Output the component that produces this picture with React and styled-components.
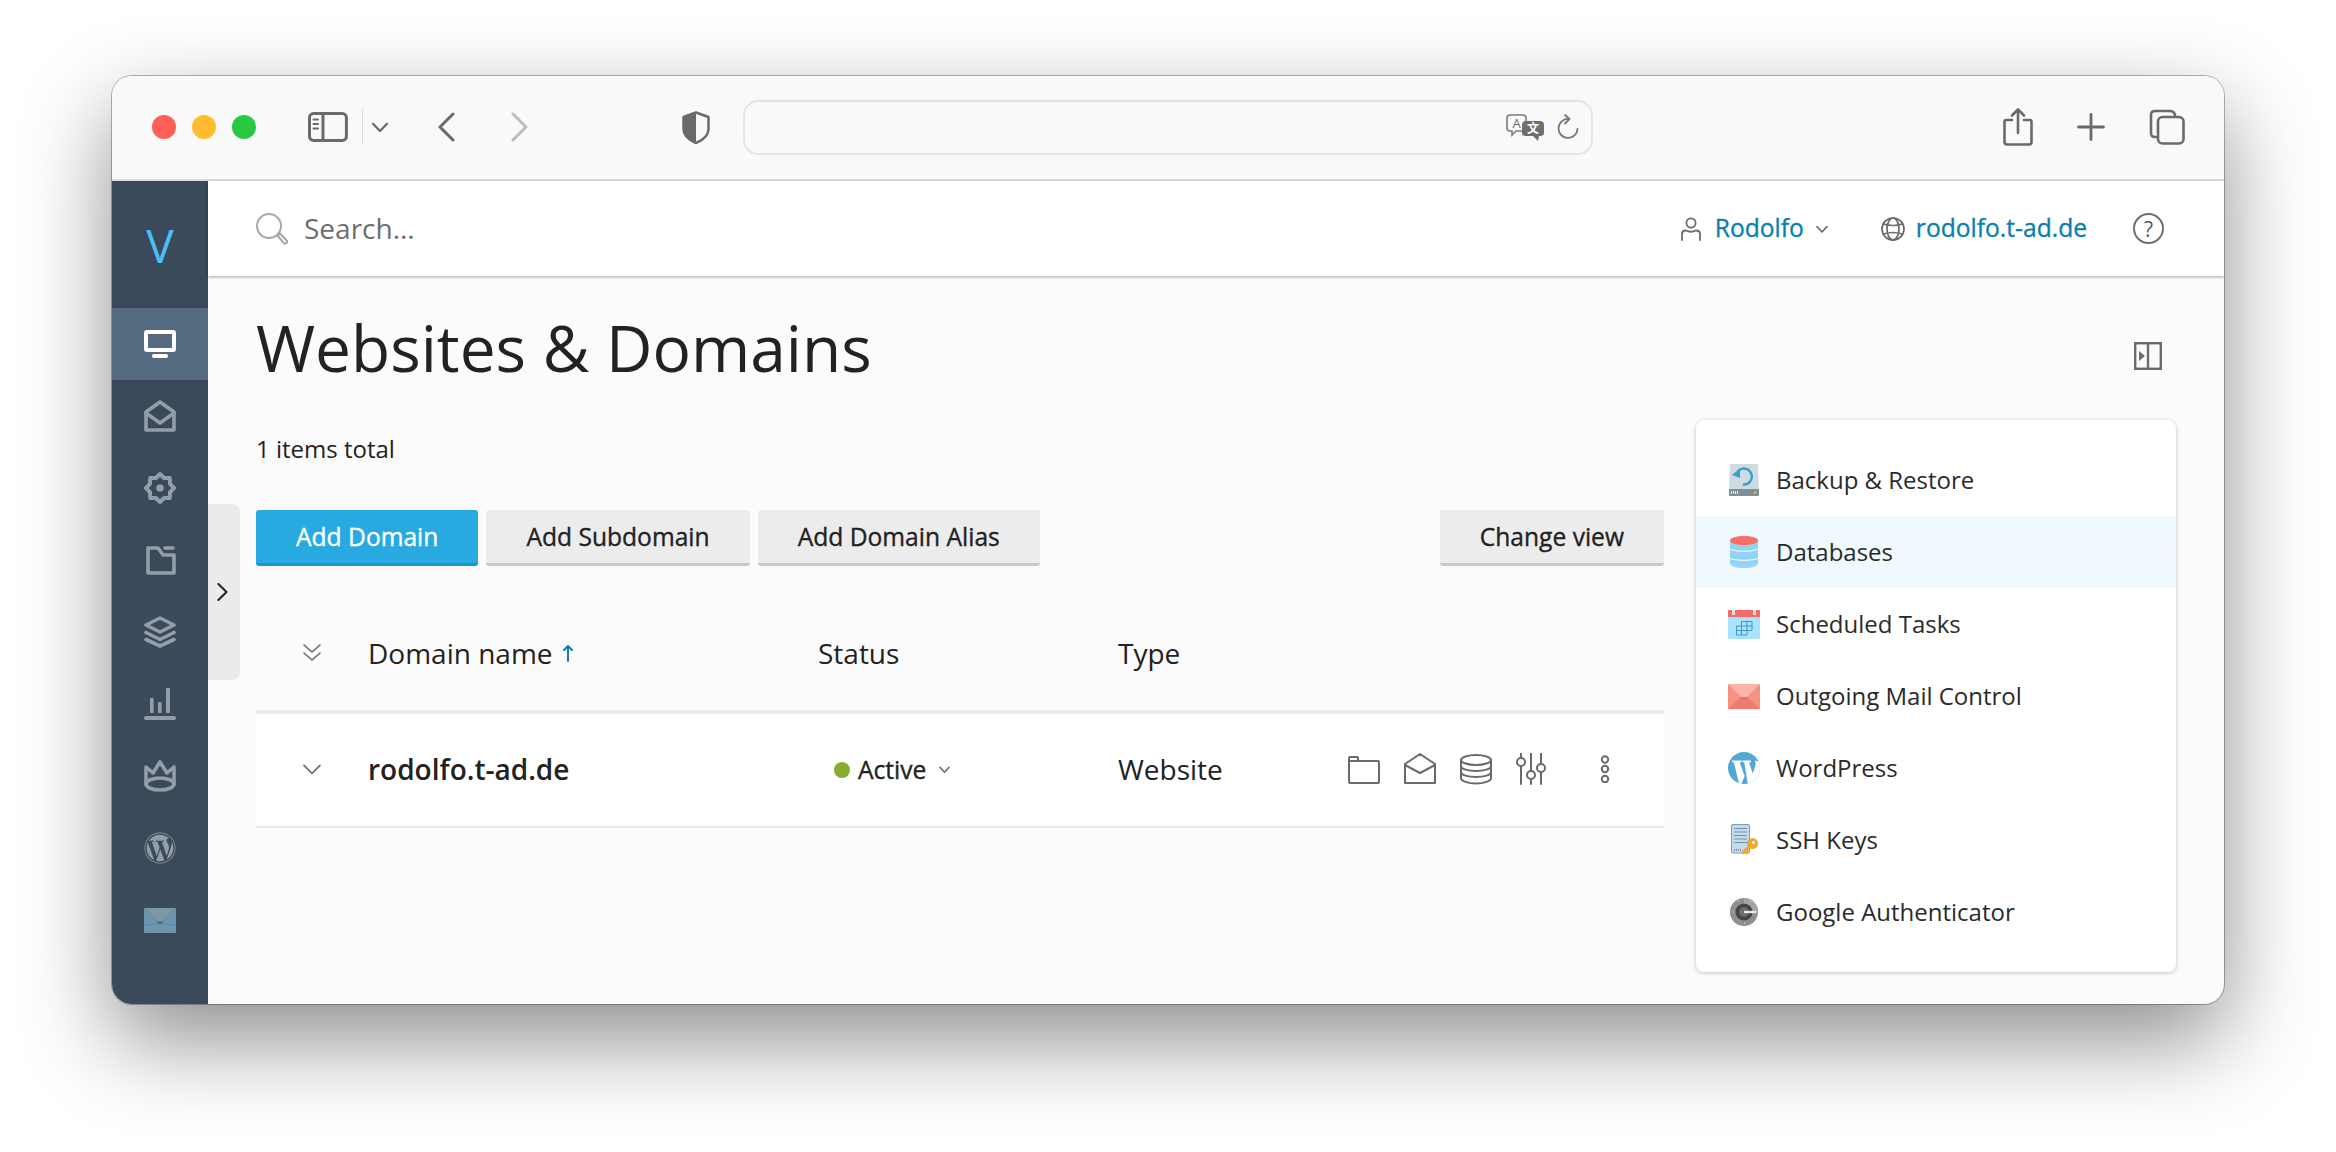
import React from 'react';
import styled, { createGlobalStyle } from 'styled-components';
import { FaWordpress } from 'react-icons/fa';

const GlobalStyle = createGlobalStyle`
  html, body { margin: 0; padding: 0; background: #fff; }
  body { font-family: "Open Sans", "Noto Sans", sans-serif; color: #222; }
  * { box-sizing: border-box; }
`;

const Page = styled.div`
  width: 2336px;
  height: 1152px;
  padding: 76px 112px 148px;
  overflow: hidden;
`;

const Win = styled.div`
  height: 928px;
  display: flex;
  flex-direction: column;
  border-radius: 20px;
  overflow: hidden;
  background: #fbfbfb;
  box-shadow: 0 0 0 1px rgba(0, 0, 0, 0.28), 0 36px 90px rgba(0, 0, 0, 0.45);
`;

const TitleBar = styled.div`
  height: 105px;
  flex: none;
  display: flex;
  align-items: center;
  padding: 0 39px 1px 40px;
  background: #f9f9f9;
  border-bottom: 2px solid #dedede;
`;

const Lights = styled.div`
  display: flex;
  gap: 16px;
  margin-right: 52px;
`;

const Light = styled.span`
  width: 24px;
  height: 24px;
  border-radius: 50%;
  background: ${p => p.$color};
`;

const Sep = styled.span`
  width: 1px;
  height: 36px;
  background: #dcdcdc;
  margin: 0 9px 0 14px;
`;

const BarIcons = styled.div`
  display: flex;
  align-items: center;
  gap: ${p => p.$gap || 0}px;
  margin-left: ${p => p.$left || 0}px;
`;

const AddressBar = styled.div`
  width: 852px;
  height: 55px;
  margin-left: 33px;
  padding-right: 12px;
  display: flex;
  align-items: center;
  justify-content: flex-end;
  gap: 13px;
  border: 2px solid #e4e4e4;
  border-radius: 15px;
`;

const Main = styled.div`
  flex: 1;
  display: flex;
  min-height: 0;
`;

const Sidebar = styled.nav`
  width: 96px;
  flex: none;
  background: #3a4a5a;
  display: flex;
  flex-direction: column;
`;

const Logo = styled.div`
  height: 127px;
  display: flex;
  align-items: center;
  justify-content: center;
  font-size: 46px;
  font-weight: 400;
  color: #4ac0f8;
`;

const NavItem = styled.div`
  height: 72px;
  display: flex;
  align-items: center;
  justify-content: center;
  color: ${p => (p.$active ? '#fff' : '#939ea9')};
  background: ${p => (p.$active ? '#536a7f' : 'transparent')};
`;

const Column = styled.div`
  position: relative;
  flex: 1;
  min-width: 0;
  display: flex;
  flex-direction: column;
`;

const Header = styled.header`
  height: 95px;
  flex: none;
  display: flex;
  align-items: center;
  padding: 0 60px 0 48px;
  background: #fff;
  box-shadow: 0 1px 3px rgba(0, 0, 0, 0.35);
  position: relative;
`;

const SearchText = styled.span`
  font-size: 28px;
  color: #6d6d6d;
  margin: 0 0 2px 16px;
  flex: 1;
`;

const HeaderLink = styled.span`
  font-size: 24.6px;
  font-weight: 500;
  -webkit-text-stroke: 0.35px currentColor;
  color: #0a7fae;
  margin: 0 0 2px ${p => p.$left}px;
`;

const HelpBadge = styled.span`
  width: 31px;
  height: 31px;
  border: 2px solid #6f6f6f;
  border-radius: 50%;
  display: flex;
  align-items: center;
  justify-content: center;
  font-size: 21px;
  color: #5a5a5a;
  margin-left: 46px;
`;

const Body = styled.div`
  flex: 1;
  display: grid;
  grid-template-columns: 1408px 480px;
  column-gap: 32px;
  padding: 0 48px;
`;

const Handle = styled.div`
  position: absolute;
  left: 0;
  top: 323px;
  width: 32px;
  height: 176px;
  padding-right: 4px;
  background: #ebebeb;
  border-radius: 0 8px 8px 0;
  display: flex;
  align-items: center;
  justify-content: center;
  color: #222;
`;

const Title = styled.h1`
  margin: 31px 0 0;
  font-size: 64px;
  line-height: 82px;
  font-weight: 400;
  color: #222;
`;

const Count = styled.div`
  margin-top: 44px;
  font-size: 24px;
  line-height: 32px;
  color: #222;
`;

const Toolbar = styled.div`
  margin-top: 45px;
  display: flex;
  gap: 8px;
`;

const Button = styled.button`
  height: 56px;
  padding: 0 40px;
  margin-left: ${p => (p.$push ? 'auto' : 0)};
  border: 0;
  border-bottom: 3px solid ${p => (p.$primary ? '#1b97cd' : '#c8c8c8')};
  border-radius: 3px;
  font-family: inherit;
  font-size: 24.6px;
  font-weight: 500;
  -webkit-text-stroke: 0.35px currentColor;
  color: ${p => (p.$primary ? '#fff' : '#222')};
  background: ${p => (p.$primary ? '#28aae1' : '#ececec')};
`;

const TableRow = styled.div`
  display: grid;
  grid-template-columns: 112px 450px 300px 230px 1fr;
  align-items: center;
  height: ${p => (p.$head ? 116 : 114)}px;
  margin-top: ${p => (p.$head ? 32 : 0)}px;
  padding-bottom: 2px;
  font-size: 28px;
  color: #222;
  background: ${p => (p.$head ? 'transparent' : '#fff')};
  border-bottom: ${p => (p.$head ? '4px solid #ebebeb' : '2px solid #ebebeb')};
`;

const ExpandCell = styled.div`
  display: flex;
  padding-left: 47px;
  color: #666;
`;

const NameCell = styled.div`
  display: flex;
  align-items: center;
  gap: 9px;
  font-weight: ${p => (p.$bold ? 600 : 400)};
`;

const StatusCell = styled.div`
  display: flex;
  align-items: center;
  padding-left: 16px;
  font-size: 24.6px;
  font-weight: 500;
  -webkit-text-stroke: 0.35px currentColor;
`;

const Dot = styled.span`
  width: 16px;
  height: 16px;
  border-radius: 50%;
  background: #86ad2c;
  margin: 2px 8px 0 0;
`;

const Actions = styled.div`
  display: flex;
  align-items: center;
  gap: 24px;
  color: #6a6a6a;
`;

const RightColumn = styled.aside`
  display: flex;
  flex-direction: column;
  padding-top: 66px;
`;

const PanelToggle = styled.div`
  display: flex;
  justify-content: flex-end;
  padding-right: 14px;
  height: 28px;
  color: #6a6a6a;
`;

const ToolPanel = styled.div`
  margin-top: 50px;
  height: 552px;
  padding: 24px 0;
  background: #fff;
  border-radius: 8px;
  box-shadow: 0 1px 4px rgba(0, 0, 0, 0.22);
`;

const ToolRow = styled.div`
  height: 72px;
  display: flex;
  align-items: center;
  padding: 0 0 2px 32px;
  font-size: 24px;
  color: #2a2a2a;
  background: ${p => (p.$active ? '#eff9fe' : 'transparent')};
`;

const ToolIcon = styled.span`
  width: 32px;
  height: 32px;
  margin: 2px 16px 0 0;
  display: flex;
  align-items: center;
  justify-content: center;
`;

const Line = ({ w, h, sw = 2.5, children, color = '#6a6a6a', style }) => (
  <svg width={w} height={h} viewBox={`0 0 ${w} ${h}`} fill="none" stroke={color} strokeWidth={sw} strokeLinecap="round" strokeLinejoin="round" style={style}>
    {children}
  </svg>
);

const gearPath = () => {
  let d = '';
  for (let i = 0; i < 16; i++) {
    const r = i % 2 === 0 ? 14 : 10.8;
    const a = (i * Math.PI) / 8 - Math.PI / 2;
    d += `${i ? 'L' : 'M'}${(16 + r * Math.cos(a)).toFixed(1)} ${(16 + r * Math.sin(a)).toFixed(1)} `;
  }
  return d + 'Z';
};

const navIcons = [
  <svg key="m" width="32" height="28" viewBox="0 0 32 28" fill="none" stroke="currentColor">
    <rect x="2" y="2" width="28" height="18" rx="1" strokeWidth="4" />
    <rect x="8" y="24" width="16" height="4" rx="2" fill="currentColor" stroke="none" />
  </svg>,
  <Line key="e" w={32} h={32} sw={3.6} color="currentColor">
    <path d="M2 12 L16 2 L30 12 V30 H2 Z" />
    <path d="M2 13 L16 23 L30 13" />
  </Line>,
  <Line key="g" w={32} h={32} sw={4} color="currentColor">
    <path d={gearPath()} />
    <circle cx="16" cy="16" r="3.8" fill="currentColor" stroke="none" />
  </Line>,
  <Line key="f" w={32} h={32} sw={3.6} color="currentColor">
    <path d="M4 4 H14 L19 11 H30 V29 H4 Z" />
    <path d="M21 4 H29" />
  </Line>,
  <Line key="l" w={32} h={32} sw={3.6} color="currentColor">
    <path d="M16 2 L30 9 L16 16 L2 9 Z" />
    <path d="M2 16.5 L16 23.5 L30 16.5" />
    <path d="M2 23.5 L16 30 L30 23.5" />
  </Line>,
  <svg key="s" width="32" height="32" viewBox="0 0 32 32" fill="currentColor">
    <rect x="6" y="10" width="3.6" height="15" rx="1" />
    <rect x="14" y="14" width="3.6" height="11" rx="1" />
    <rect x="22" y="0" width="4" height="25" rx="1" />
    <rect x="0" y="28" width="32" height="4" rx="2" />
  </svg>,
  <Line key="c" w={32} h={32} sw={3.6} color="currentColor">
    <path d="M2 24 V7 L9 13 L16 2 L23 13 L30 7 V24" />
    <ellipse cx="16" cy="24" rx="14" ry="6" />
  </Line>,
  <FaWordpress key="w" size={32} />,
  <svg key="b" width="32" height="25" viewBox="0 0 32 25">
    <rect width="32" height="25" rx="1.5" fill="#6d95ad" />
    <path d="M0 0 H32 L19 14 H13 Z" fill="#7e97a8" />
    <path d="M2 1 L13 14 H19 L30 1 M0 17 L12 16 M32 17 L20 16" stroke="#5d89a3" strokeWidth="1" fill="none" />
    <rect x="13" y="13" width="6" height="3" fill="#4c7690" />
  </svg>,
];

const SidebarPanelIcon = () => (
  <Line w={40} h={30} sw={3}>
    <rect x="1.5" y="1.5" width="37" height="27" rx="4" />
    <path d="M15 2 V28" />
    <path d="M5.5 7.5 H10 M5.5 12 H10 M5.5 16.5 H10" strokeWidth="2" />
  </Line>
);

const ShieldIcon = () => (
  <svg width="28" height="33" viewBox="0 0 28 33">
    <path d="M14 1.5 L26.5 6 V18 C26.5 25 20 29.5 14 32 C8 29.5 1.5 25 1.5 18 V6 Z" fill="none" stroke="#6a6a6a" strokeWidth="2.5" strokeLinejoin="round" />
    <path d="M14 1.5 L1.5 6 V18 C1.5 25 8 29.5 14 32 Z" fill="#6a6a6a" />
  </svg>
);

const TranslateIcon = () => (
  <svg width="38" height="27" viewBox="0 0 38 27">
    <path d="M4 1 H17 Q20 1 20 4 V14 Q20 17 17 17 H10 L6 21 V17 H4 Q1 17 1 14 V4 Q1 1 4 1 Z" fill="#f9f9f9" stroke="#7c7c7c" strokeWidth="1.6" />
    <text x="10.5" y="13.5" textAnchor="middle" fontSize="13" fontFamily="Open Sans, sans-serif" fill="#6a6a6a">A</text>
    <path d="M20 7 H34 Q38 7 38 11 V19 Q38 22 34 22 H33 L32 27 L27 22 H20 Q16 22 16 19 V11 Q16 7 20 7 Z" fill="#6f6f6f" />
    <text x="27" y="19" textAnchor="middle" fontSize="12" fontWeight="700" fontFamily="Noto Sans CJK SC, sans-serif" fill="#fff">文</text>
  </svg>
);

const ReloadIcon = () => (
  <Line w={22} h={26} sw={1.8} color="#777">
    <path d="M12 5 A9.5 9.5 0 1 0 20.5 15" />
    <path d="M8 1 L12.5 5 L8 9.5" />
  </Line>
);

const ShareIcon = () => (
  <Line w={30} h={38} sw={2.6}>
    <path d="M9 12 H3 Q1.5 12 1.5 14 V34 Q1.5 36.5 4 36.5 H26 Q28.5 36.5 28.5 34 V14 Q28.5 12 27 12 H21" />
    <path d="M15 2 V25" />
    <path d="M9 7.5 L15 1.5 L21 7.5" />
  </Line>
);

const TabsIcon = () => (
  <Line w={36} h={36} sw={2.6}>
    <path d="M7 28 H6 Q2 28 2 24 V6 Q2 2 6 2 H21 Q25 2 26 6" />
    <rect x="9" y="8" width="25.5" height="26.5" rx="4.5" />
  </Line>
);

const SearchIcon = () => (
  <svg width="32" height="32" viewBox="0 0 32 32" fill="none" stroke="#a8a8a8" strokeWidth="2">
    <circle cx="13" cy="13" r="12" />
    <path d="M21.5 22.5 L24 20.5 L31 28 Q31.5 30.5 28.5 30.8 Z" strokeLinejoin="round" />
  </svg>
);

const UserIcon = () => (
  <Line w={20} h={24} sw={1.8}>
    <circle cx="10" cy="6" r="4.6" />
    <path d="M1 23 V17 Q1 13.5 5 13.5 Q10 16 15 13.5 Q19 13.5 19 17 V23" />
  </Line>
);

const GlobeIcon = () => (
  <Line w={24} h={24} sw={1.7}>
    <circle cx="12" cy="12" r="11" />
    <ellipse cx="12" cy="12" rx="6" ry="11" />
    <path d="M2.5 7 Q12 10 21.5 7 M2.5 17 Q12 14 21.5 17" />
  </Line>
);

const Chevron = ({ size = 12, dir = 'down', color = '#6a6a6a', sw = 1.6 }) => (
  <Line w={size} h={size} sw={sw} color={color}>
    {dir === 'down' && <path d={`M1 ${size * 0.3} L${size / 2} ${size * 0.75} L${size - 1} ${size * 0.3}`} />}
    {dir === 'right' && <path d={`M${size * 0.3} 1 L${size * 0.75} ${size / 2} L${size * 0.3} ${size - 1}`} />}
  </Line>
);

const PanelIcon = () => (
  <svg width="28" height="28" viewBox="0 0 28 28" fill="none" stroke="#6a6a6a" strokeWidth="2.4">
    <rect x="1.2" y="1.2" width="25.6" height="25.6" />
    <path d="M14 1 V27" />
    <path d="M5 9 L11 14 L5 19 Z" fill="#6a6a6a" stroke="none" />
  </svg>
);

const rowIcons = [
  <Line key="f" w={32} h={32} sw={2}>
    <path d="M1 28 V5 Q1 4 2 4 H9 Q10 4 10 5 V8 H30 Q31 8 31 9 V29 Q31 30 30 30 H2 Q1 30 1 28 Z" />
    <path d="M1 8 H10" />
  </Line>,
  <Line key="m" w={32} h={32} sw={2}>
    <path d="M1 11 L16 1 L31 11 V30 H1 Z" />
    <path d="M1 12 L16 20 L31 12" />
  </Line>,
  <Line key="d" w={32} h={32} sw={2}>
    <ellipse cx="16" cy="7" rx="15" ry="5" />
    <path d="M1 7 V25 C1 28 8 30.5 16 30.5 C24 30.5 31 28 31 25 V7" />
    <path d="M1 13 C1 16 8 18 16 18 C24 18 31 16 31 13" />
    <path d="M1 19 C1 22 8 24 16 24 C24 24 31 22 31 19" />
  </Line>,
  <Line key="s" w={32} h={32} sw={2}>
    <path d="M5 0 V5 M5 13 V31 M15 0 V18 M15 26 V31 M25 0 V11 M25 19 V31" />
    <circle cx="5" cy="9" r="4" />
    <circle cx="15" cy="22" r="4" />
    <circle cx="25" cy="15" r="4" />
  </Line>,
];

const DotsIcon = () => (
  <Line w={32} h={28} sw={2} style={{ marginLeft: 17 }}>
    <circle cx="16" cy="4.5" r="3.2" />
    <circle cx="16" cy="14" r="3.2" />
    <circle cx="16" cy="24" r="3.2" />
  </Line>
);

const BackupIcon = () => (
  <svg width="32" height="32" viewBox="0 0 32 32">
    <path d="M3 0 H29 Q30 0 30 1 L31 26 H1 L2 1 Q2 0 3 0 Z" fill="#d0dbe1" />
    <rect x="1" y="25" width="30" height="7" rx="1" fill="#7f8e98" />
    <path d="M3 28.5 H11" stroke="#fff" strokeWidth="2.4" strokeDasharray="1 1" />
    <rect x="26" y="27.5" width="2.5" height="2" fill="#d8c84a" />
    <path d="M10 7 A8 8 0 1 1 15 20.5" fill="none" stroke="#3a9fcb" strokeWidth="2.4" />
    <path d="M4 11 L12 4.5 V14 Z" fill="#3a9fcb" />
  </svg>
);

const DatabaseIcon = () => (
  <svg width="32" height="32" viewBox="0 0 32 32">
    <path d="M2 5 V27 C2 30 9 32 16 32 C23 32 30 30 30 27 V5 Z" fill="#90d4f6" />
    <ellipse cx="16" cy="4.6" rx="14" ry="4.6" fill="#f96e66" />
    <path d="M2 13 C4 16 28 16 30 13 M2 22 C4 25 28 25 30 22" fill="none" stroke="#fff" strokeWidth="1" />
  </svg>
);

const CalendarIcon = () => (
  <svg width="32" height="29" viewBox="0 0 32 29">
    <rect width="32" height="29" fill="#a8e2fb" />
    <path d="M1 0 H31 Q32 0 32 1 V7 H0 V1 Q0 0 1 0 Z" fill="#f8696a" />
    <rect x="4" y="0" width="3" height="5" fill="#e8e8e8" />
    <rect x="25" y="0" width="3" height="5" fill="#e8e8e8" />
    <path d="M13.5 11.5 H24 V20 M8.5 16 H24 M8.5 20.5 H24 M8.5 25 H19 M8.5 16 V25 M13.5 11.5 V25 M19 11.5 V25" fill="none" stroke="#3a9cc5" strokeWidth="1" />
  </svg>
);

const MailIcon = () => (
  <svg width="32" height="25" viewBox="0 0 32 25">
    <rect width="32" height="25" rx="1" fill="#f69080" />
    <path d="M0 0 H32 L19 13 H13 Z" fill="#f9b5a6" />
    <path d="M0 25 L13 13 H19 L32 25 Z" fill="#ee7b6e" />
    <path d="M13 13 L16 15 L19 13" fill="none" stroke="#c86a55" strokeWidth="1" />
  </svg>
);

const WordpressBadge = () => (
  <svg width="32" height="32" viewBox="0 0 32 32">
    <clipPath id="wp-disc"><circle cx="16" cy="16" r="16" /></clipPath>
    <circle cx="16" cy="16" r="16" fill="#4fa9d3" />
    <g clipPath="url(#wp-disc)" fill="#fff">
      <path d="M4 8.6 H13.6 V10.2 H11.6 L16.6 24 L13 33 H11.4 L5.8 10.2 H4 Z" />
      <path d="M14.6 8.6 H23 V10.2 H21 L24.8 21.5 L27.4 13.4 Q28 11 26.8 8.6 L33 10 V24 L21.6 33 H20 L16.2 10.2 H14.6 Z" />
    </g>
  </svg>
);

const SshIcon = () => (
  <svg width="32" height="32" viewBox="0 0 32 32">
    <rect x="3.5" y="0.5" width="18" height="28.5" rx="1.5" fill="#c6dbea" stroke="#739fc0" strokeWidth="1" />
    <path d="M6 4.5 H19 M6 8 H19 M6 11.5 H19 M6 15 H19 M6 18.5 H19" stroke="#6d93b0" strokeWidth="1.2" />
    <path d="M6 26 H13" stroke="#7d8e9a" strokeWidth="2" strokeDasharray="1 1" />
    <path d="M22 22 L14.5 29.5 M17.5 27 L20 29.5" stroke="#efa732" strokeWidth="3.2" />
    <circle cx="24.5" cy="19.5" r="5.6" fill="#efa732" />
    <circle cx="25.5" cy="18.4" r="1.5" fill="#fff" />
  </svg>
);

const GoogleAuthIcon = () => (
  <svg width="32" height="32" viewBox="0 0 32 32">
    <circle cx="16" cy="16" r="14" fill="#8f8f8f" />
    <path d="M16 2 A14 14 0 0 1 30 16 H16 Z" fill="#a3a3a3" />
    <circle cx="16" cy="16" r="6.8" fill="#6c6c6c" stroke="#454545" strokeWidth="3.6" />
    <rect x="16" y="14.8" width="12.5" height="2.4" fill="#e6e6e6" />
    <path d="M10 5 h1 M22 5 h1 M5 16 h1 M16 27 h1" stroke="#c8c8c8" strokeWidth="1.6" />
  </svg>
);

const tools = [
  { label: 'Backup & Restore', icon: <BackupIcon /> },
  { label: 'Databases', icon: <DatabaseIcon />, active: true },
  { label: 'Scheduled Tasks', icon: <CalendarIcon /> },
  { label: 'Outgoing Mail Control', icon: <MailIcon /> },
  { label: 'WordPress', icon: <WordpressBadge /> },
  { label: 'SSH Keys', icon: <SshIcon /> },
  { label: 'Google Authenticator', icon: <GoogleAuthIcon /> },
];

export default function App() {
  return (
    <Page>
      <GlobalStyle />
      <Win>
        <TitleBar>
          <Lights>
            <Light $color="#ff5f57" />
            <Light $color="#febc2e" />
            <Light $color="#28c840" />
          </Lights>
          <SidebarPanelIcon />
          <Sep />
          <Chevron size={16} sw={2.2} />
          <BarIcons $left={50}>
            <Line w={17} h={30} sw={3}><path d="M15 2 L2 15 L15 28" /></Line>
          </BarIcons>
          <BarIcons $left={56}>
            <Line w={17} h={30} sw={3} color="#bdbdbd"><path d="M2 2 L15 15 L2 28" /></Line>
          </BarIcons>
          <BarIcons $left={154}>
            <ShieldIcon />
          </BarIcons>
          <AddressBar>
            <TranslateIcon />
            <ReloadIcon />
          </AddressBar>
          <BarIcons $left={410} $gap={44}>
            <ShareIcon />
            <Line w={28} h={28} sw={2.8}><path d="M14 1.5 V26.5 M1.5 14 H26.5" /></Line>
            <TabsIcon />
          </BarIcons>
        </TitleBar>
        <Main>
          <Sidebar>
            <Logo>V</Logo>
            {navIcons.map((icon, i) => (
              <NavItem key={i} $active={i === 0}>{icon}</NavItem>
            ))}
          </Sidebar>
          <Column>
            <Header>
              <SearchIcon />
              <SearchText>Search...</SearchText>
              <UserIcon />
              <HeaderLink $left={14}>Rodolfo</HeaderLink>
              <BarIcons $left={12}><Chevron size={12} /></BarIcons>
              <BarIcons $left={53}><GlobeIcon /></BarIcons>
              <HeaderLink $left={11}>rodolfo.t-ad.de</HeaderLink>
              <HelpBadge>?</HelpBadge>
            </Header>
            <Handle><Chevron size={18} dir="right" color="#222" sw={2} /></Handle>
            <Body>
              <div>
                <Title>Websites &amp; Domains</Title>
                <Count>1 items total</Count>
                <Toolbar>
                  <Button $primary>Add Domain</Button>
                  <Button>Add Subdomain</Button>
                  <Button>Add Domain Alias</Button>
                  <Button $push>Change view</Button>
                </Toolbar>
                <TableRow $head>
                  <ExpandCell>
                    <Line w={18} h={18} sw={1.6}><path d="M1 1 L9 8 L17 1 M1 9 L9 16 L17 9" /></Line>
                  </ExpandCell>
                  <NameCell>
                    Domain name
                    <Line w={12} h={18} sw={2} color="#0a7fae"><path d="M6 17 V2 M2 6 L6 2 L10 6" /></Line>
                  </NameCell>
                  <div>Status</div>
                  <div>Type</div>
                  <div />
                </TableRow>
                <TableRow>
                  <ExpandCell><Chevron size={18} sw={1.6} /></ExpandCell>
                  <NameCell $bold>rodolfo.t-ad.de</NameCell>
                  <StatusCell>
                    <Dot />
                    Active
                    <BarIcons $left={13}><Chevron size={11} sw={1.5} /></BarIcons>
                  </StatusCell>
                  <div>Website</div>
                  <Actions>
                    {rowIcons}
                    <DotsIcon />
                  </Actions>
                </TableRow>
              </div>
              <RightColumn>
                <PanelToggle><PanelIcon /></PanelToggle>
                <ToolPanel>
                  {tools.map(t => (
                    <ToolRow key={t.label} $active={t.active}>
                      <ToolIcon>{t.icon}</ToolIcon>
                      {t.label}
                    </ToolRow>
                  ))}
                </ToolPanel>
              </RightColumn>
            </Body>
          </Column>
        </Main>
      </Win>
    </Page>
  );
}
